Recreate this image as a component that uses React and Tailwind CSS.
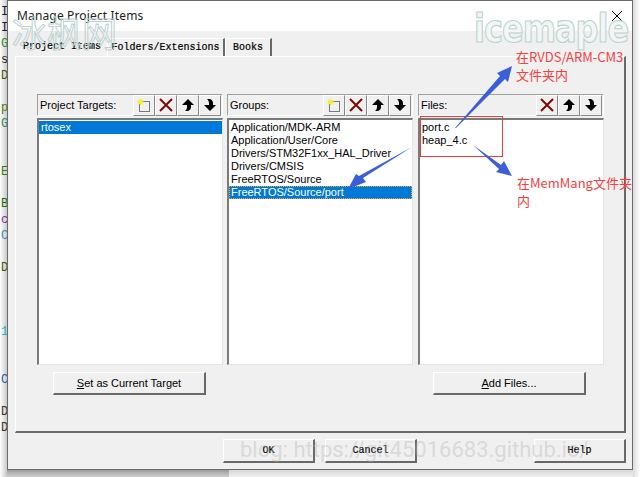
import React from "react";

const leftLetters = [
  ["I", "text-[#1a1a40]"], ["I", "text-[#1a1a40]"], ["G", "text-[#2a8a3a]"], ["s", "text-[#222]"], ["D", "text-[#3a5a10]"], [" ", ""],
  ["p", "text-[#4a7a10]"], ["G", "text-[#2a8a5a]"], [" ", ""], [" ", ""], ["E", "text-[#3a7a10]"], [" ", ""],
  ["B", "text-[#1a6a10]"], ["c", "text-[#8a2a9a]"], ["C", "text-[#3a8aaa]"], [" ", ""], ["D", "text-[#3a5a10]"], [" ", ""],
  [" ", ""], [" ", ""], ["1", "text-[#20b0c0]"], [" ", ""], [" ", ""], ["C", "text-[#2a5aaa]"], [" ", ""],
  ["D", "text-[#333]"], ["D", "text-[#333]"],
];

const groups = [
  "Application/MDK-ARM",
  "Application/User/Core",
  "Drivers/STM32F1xx_HAL_Driver",
  "Drivers/CMSIS",
  "FreeRTOS/Source",
];

const NewIcon = () => (
  <svg width="16" height="16" viewBox="0 0 16 16">
    <rect x="3.500" y="4.500" width="10" height="10" fill="none" stroke="#000" strokeDasharray="1 1" />
    <path d="M4.500 1l.8 2 2-.8-.8 2 2 .8-2 .8.8 2-2-.8-.8 2-.8-2-2 .8.8-2-2-.8 2-.8-.8-2 2 .8z" fill="#f5f030" />
  </svg>
);

const DeleteIcon = () => (
  <svg width="16" height="16" viewBox="0 0 16 16">
    <path d="M2 2l12 12M14 2L2 14" stroke="#7b0a0a" strokeWidth="2" />
  </svg>
);

const UpIcon = () => (
  <svg width="16" height="16" viewBox="0 0 16 16">
    <path d="M8 2l6 6H11v2c0 2-1 3-3 4H5c1-1 2-2 2-4V8H2z" fill="#000" />
  </svg>
);

const DownIcon = () => (
  <svg width="16" height="16" viewBox="0 0 16 16">
    <path d="M8 14l6-6H11V6c0-2-1-3-3-4H5c1 1 2 2 2 4v2H2z" fill="#000" />
  </svg>
);

const ToolButton = ({ children }) => (
  <div className="flex h-[21px] w-[22px] items-center justify-center border-r border-b border-r-[#8a8a8a] border-b-[#8a8a8a] border-t border-l border-t-white border-l-white bg-[#f0f0f0]">
    {children}
  </div>
);

const Column = ({ title, tools, children }) => (
  <div className="flex w-[186px] flex-col">
    <div className="flex h-[22px] items-center justify-between border-t border-l border-t-[#a0a0a0] border-l-[#a0a0a0] border-b border-r border-b-white border-r-white pl-[2px] pr-px">
      <span>{title}</span>
      <div className="flex">{tools}</div>
    </div>
    <div className="mt-[2px] h-[247px] border-t-2 border-l-2 border-t-[#7a7a7a] border-l-[#7a7a7a] border-r border-b border-r-[#e4e4e4] border-b-[#e4e4e4] bg-white pt-px">
      {children}
    </div>
  </div>
);

const Row = ({ children, selected, dotted }) => (
  <div
    className={
      "h-[13px] pl-[2px] leading-[13px] " +
      (selected ? "bg-[#0078d7] text-white " : "") +
      (dotted ? "outline-1 -outline-offset-1 outline-dotted outline-[#f5a623]" : "")
    }
  >
    {children}
  </div>
);

const WinButton = ({ children, className }) => (
  <div
    className={
      "flex items-center justify-center border-t border-l border-t-white border-l-white border-r-2 border-b-2 border-r-[#696969] border-b-[#696969] bg-[#f0f0f0] " +
      className
    }
  >
    {children}
  </div>
);

const App = () => {
  return (
    <div className="relative flex h-[477px] w-[640px] overflow-hidden bg-white font-['Liberation_Sans',sans-serif] text-[11px] text-black">
      {/* editor behind the dialog */}
      <div className="h-full w-[7px] overflow-hidden bg-gradient-to-r from-white to-[#c9c9c9] pt-[4px] font-['Liberation_Mono',monospace] text-[12px] leading-[16px]">
        {leftLetters.map((l, i) => (
          <div key={i} className={"h-[16px] pl-[1px] " + l[1]}>{l[0]}</div>
        ))}
      </div>

      <div className="flex w-[626px] flex-col">
        <div className="flex h-[470px] flex-col border border-[#6a6a6a] bg-[#f0f0f0]">
          <div className="flex h-[30px] items-center justify-between bg-white pl-[9px] pr-[8px] font-['Noto_Sans',sans-serif] text-[12px] tracking-[0.15px] text-[#222]">
            <span>Manage Project Items</span>
            <svg width="12" height="12" viewBox="0 0 12 12" className="mr-[1px]">
              <path d="M1 1l10 10M11 1L1 11" stroke="#000" strokeWidth="1" />
            </svg>
          </div>

          <div className="flex h-[25px] items-end pl-[9px] font-['Liberation_Mono',monospace] text-[10px] [-webkit-text-stroke:0.2px_#000]">
            <div className="flex h-[19px] w-[90px] items-start justify-center pt-[2px]">Project Items</div>
            <div className="flex h-[18px] w-[118px] items-center justify-center border-t border-l border-t-white border-l-white border-r-2 border-r-[#696969]">Folders/Extensions</div>
            <div className="flex h-[18px] w-[47px] items-center justify-center border-t border-l border-t-white border-l-white border-r-2 border-r-[#696969]">Books</div>
          </div>

          <div className="ml-[7px] flex h-[377px] w-[611px] flex-col border-t border-l border-t-white border-l-white border-r-2 border-b-2 border-r-[#696969] border-b-[#696969] pl-[21px] pt-[37px]">
            <div className="flex">
              <Column
                title="Project Targets:"
                tools={<>
                  <ToolButton><NewIcon /></ToolButton>
                  <ToolButton><DeleteIcon /></ToolButton>
                  <ToolButton><UpIcon /></ToolButton>
                  <ToolButton><DownIcon /></ToolButton>
                </>}
              >
                <Row selected>rtosex</Row>
              </Column>
              <div className="w-[4px]" />
              <Column
                title="Groups:"
                tools={<>
                  <ToolButton><NewIcon /></ToolButton>
                  <ToolButton><DeleteIcon /></ToolButton>
                  <ToolButton><UpIcon /></ToolButton>
                  <ToolButton><DownIcon /></ToolButton>
                </>}
              >
                {groups.map((g) => (
                  <Row key={g}>{g}</Row>
                ))}
                <Row selected dotted>FreeRTOS/Source/port</Row>
              </Column>
              <div className="w-[5px]" />
              <Column
                title="Files:"
                tools={<>
                  <ToolButton><DeleteIcon /></ToolButton>
                  <ToolButton><UpIcon /></ToolButton>
                  <ToolButton><DownIcon /></ToolButton>
                </>}
              >
                <Row>port.c</Row>
                <Row>heap_4.c</Row>
              </Column>
            </div>

            <div className="mt-[7px] flex">
              <WinButton className="ml-[16px] h-[23px] w-[153px]"><span><u>S</u>et as Current Target</span></WinButton>
              <WinButton className="ml-[227px] h-[23px] w-[153px]"><span><u>A</u>dd Files...</span></WinButton>
            </div>
          </div>

          <div className="mt-[6px] flex pl-[215px] pr-[6px] font-['Liberation_Mono',monospace] text-[10px] [-webkit-text-stroke:0.2px_#000]">
            <WinButton className="h-[24px] w-[92px]">OK</WinButton>
            <WinButton className="ml-[10px] h-[24px] w-[92px]">Cancel</WinButton>
            <WinButton className="ml-auto h-[24px] w-[92px]">Help</WinButton>
          </div>
        </div>

        {/* drop shadow under the dialog */}
        <div className="flex h-[7px]">
          <div className="w-[222px] bg-gradient-to-b from-[#9c9c9c] to-[#d0d0d0]" />
          <div className="flex-1 bg-gradient-to-b from-[#d8d8d8] to-[#f0f0f0]" />
        </div>
      </div>

      <div className="h-full w-[7px] bg-gradient-to-r from-[#dcdcdc] to-white" />

      {/* annotations pasted over the screenshot */}
      <svg className="pointer-events-none absolute inset-0" width="640" height="477" viewBox="0 0 640 477">
        <rect x="420.500" y="116.500" width="82" height="40" fill="none" stroke="#f03a3a" strokeWidth="1" />
        <path d="M455 128L500 76L497 73L512 66L508 82L505 79L456 128z" fill="#3b5fd9" />
        <path d="M473 145L501 165L504 161L512 176L496 172L499 169z" fill="#3b5fd9" />
        <path d="M412 147L363 178L366 182L348 189L356 174L359 176z" fill="#3b5fd9" />
      </svg>

      <div className="pointer-events-none absolute left-[516px] top-[48px] font-['Noto_Sans_CJK_SC',sans-serif] text-[13px] leading-[18px] text-[#f54040]">
        <div>在RVDS/ARM-CM3</div>
        <div>文件夹内</div>
      </div>
      <div className="pointer-events-none absolute left-[517px] top-[174px] w-[116px] font-['Noto_Sans_CJK_SC',sans-serif] text-[13px] leading-[18px] text-[#f54040]">
        在MemMang文件夹内
      </div>

      {/* watermarks */}
      <div className="pointer-events-none absolute left-[474px] top-[6px] origin-top scale-y-[1.200] font-['DejaVu_Sans',sans-serif] text-[32px] font-bold leading-[38px] tracking-[-1px] text-[#f2f6f5] [-webkit-text-stroke:1px_#bcd2d0]">
        icemaple
      </div>
      <div className="pointer-events-none absolute left-[12px] top-[13px] font-['Noto_Sans_CJK_SC',sans-serif] text-[35px] leading-[38px] text-transparent [-webkit-text-stroke:1px_#bcd2d0]">
        冰枫网
      </div>
      <div className="pointer-events-none absolute left-[240px] top-[435px] whitespace-nowrap font-['Roboto',sans-serif] text-[22px] leading-[30px] text-[#b4b4b4]/40">
        blog: https://git45016683.github.io/
      </div>
    </div>
  );
};

export default App;
